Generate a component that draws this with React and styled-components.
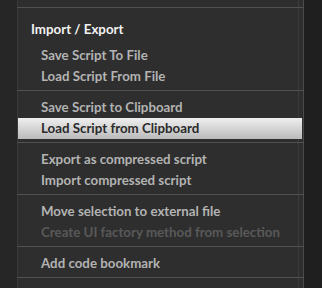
import React from "react";
import styled, { createGlobalStyle } from "styled-components";

const Global = createGlobalStyle`
  html, body { margin: 0; padding: 0; background: #262626; }
  body { width: 322px; height: 288px; overflow: hidden; }
`;

const Page = styled.div`
  display: flex;
  width: 322px;
  height: 288px;
  background: #262626;
  font-family: Lato, "Open Sans", sans-serif;
  font-weight: 700;
`;

const Gutter = styled.div`
  width: 17px;
  flex: none;
`;

const Menu = styled.div`
  width: 285px;
  flex: none;
  border-left: 1px solid #3a3a3a;
  border-right: 1px solid #4a4a4a;
  background: linear-gradient(to right, transparent 280px, #3b3b3b 280px, #3b3b3b 281px, transparent 281px), #2e2e2e;
  display: flex;
  flex-direction: column;
`;

const Dark = styled.div`
  flex: 1;
  background: #1f1f1f;
`;

const Top = styled.div`
  height: 7px;
`;

const Divider = styled.div`
  height: 1px;
  background: #505050;
  margin-right: -1px;
  margin-left: -1px;
`;

const Group = styled.div`
  padding: 6px 0 3px;
  display: flex;
  flex-direction: column;
`;

const Header = styled.div`
  height: 31px;
  line-height: 31px;
  padding-left: 13px;
  font-size: 13.3px;
  color: #f2f2f2;
`;

const Item = styled.div`
  height: 21px;
  line-height: 21px;
  padding-left: 23px;
  margin-right: 1px;
  font-size: 13.3px;
  color: ${(p) => (p.$disabled ? "#595959" : p.$active ? "#2b2b2b" : "#b3b3b3")};
  background: ${(p) => (p.$active ? "linear-gradient(#efefef, #bababa)" : "transparent")};
  white-space: nowrap;
`;

const groups = [
  {
    header: "Import / Export",
    items: [{ t: "Save Script To File" }, { t: "Load Script From File" }],
  },
  {
    items: [{ t: "Save Script to Clipboard" }, { t: "Load Script from Clipboard", active: true }],
  },
  {
    items: [{ t: "Export as compressed script" }, { t: "Import compressed script" }],
  },
  {
    items: [
      { t: "Move selection to external file" },
      { t: "Create UI factory method from selection", disabled: true },
    ],
  },
  { items: [{ t: "Add code bookmark" }] },
];

export default function App() {
  return (
    <>
      <Global />
      <Page>
        <Gutter />
        <Menu>
          <Top />
          {groups.map((g, i) => (
            <React.Fragment key={i}>
              <Divider />
              <Group>
                {g.header && <Header>{g.header}</Header>}
                {g.items.map((it) => (
                  <Item key={it.t} $active={it.active} $disabled={it.disabled}>
                    {it.t}
                  </Item>
                ))}
              </Group>
            </React.Fragment>
          ))}
          <Divider />
        </Menu>
        <Dark />
      </Page>
    </>
  );
}
